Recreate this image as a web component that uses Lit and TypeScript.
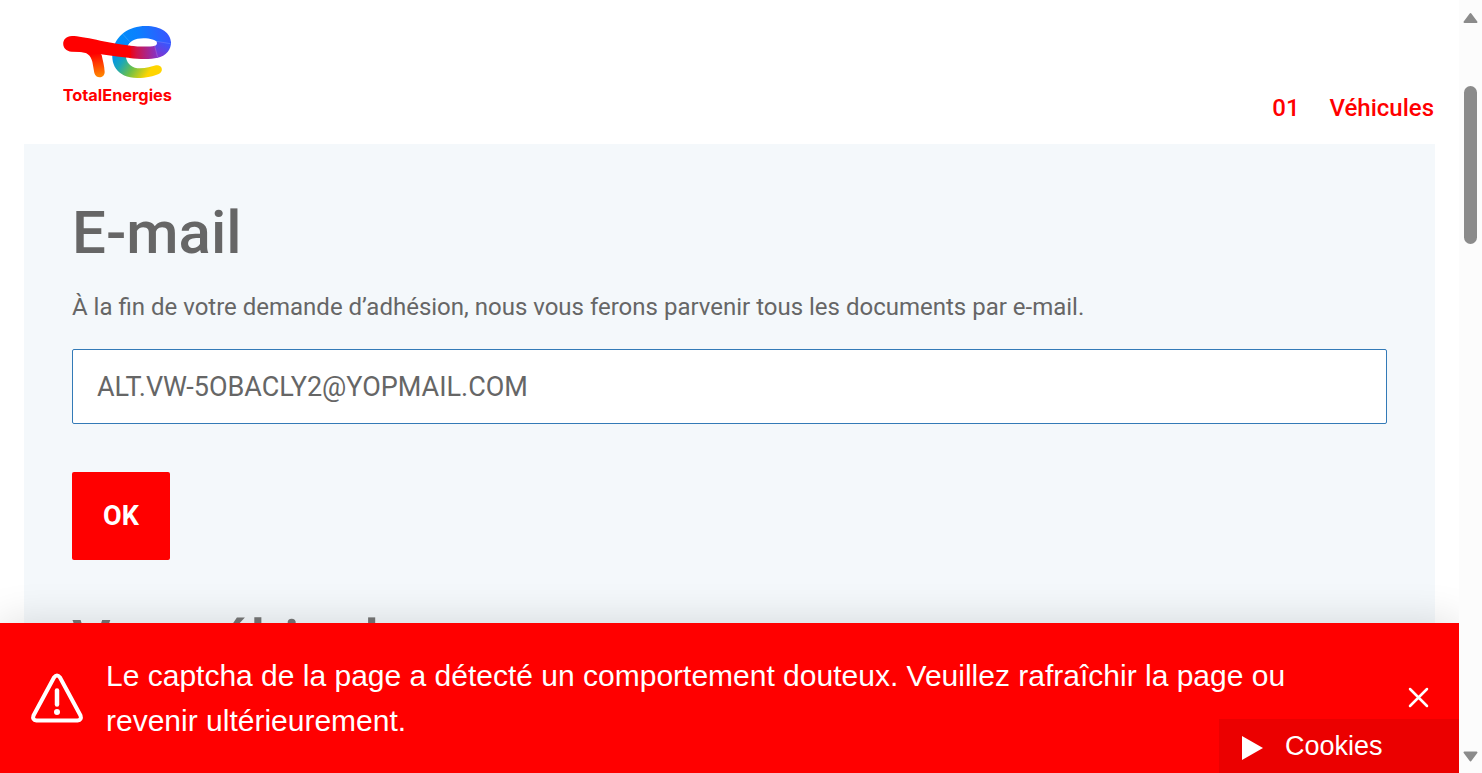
import { LitElement, html, css } from "lit";
import { customElement, state } from "lit/decorators.js";

@customElement("brand-logo")
class BrandLogo extends LitElement {
  static styles = css`
    :host { display: block; }
    .logo { display: block; width: 110px; height: 84px; }
    .name { font: 700 49px Inter, "Liberation Sans", sans-serif; fill: #f00; }
  `;
  render() {
    return html`
      <svg class="logo" viewBox="39 30 330 252" role="img" aria-label="TotalEnergies">
        <defs>
          <linearGradient id="top" gradientUnits="userSpaceOnUse" x1="195" y1="90" x2="355" y2="70">
            <stop offset="0" stop-color="#0090f5" /><stop offset=".45" stop-color="#0a80ff" /><stop offset="1" stop-color="#3657ff" />
          </linearGradient>
          <linearGradient id="low" gradientUnits="userSpaceOnUse" x1="193" y1="112" x2="292" y2="180">
            <stop offset="0" stop-color="#0090f0" /><stop offset=".3" stop-color="#1ba7b8" /><stop offset=".6" stop-color="#6cc04a" /><stop offset="1" stop-color="#ffd500" />
          </linearGradient>
          <linearGradient id="band" gradientUnits="userSpaceOnUse" x1="238" y1="110" x2="325" y2="105">
            <stop offset="0" stop-color="#f00010" /><stop offset=".25" stop-color="#d0144a" /><stop offset="1" stop-color="#8035d0" />
          </linearGradient>
          <linearGradient id="side" gradientUnits="userSpaceOnUse" x1="322" y1="122" x2="345" y2="80">
            <stop offset="0" stop-color="#8035d0" /><stop offset="1" stop-color="#3657ff" />
          </linearGradient>
          <linearGradient id="leg" gradientUnits="userSpaceOnUse" x1="140" y1="115" x2="150" y2="182">
            <stop offset="0" stop-color="#ff0000" /><stop offset="1" stop-color="#ff8200" />
          </linearGradient>
        </defs>
        <path fill="url(#low)" d="M190 100C178 146 200 189 262 189C290 189 311 184 326 177C343 169 336 148 318 151C303 155 289 160 270 160C248 160 232 148 228 128L240 100Z" />
        <path fill="url(#top)" d="M189 104C198 62 236 33 287 33C334 33 363 55 363 84L322 82C317 76 302 70 280 70C255 70 237 80 232 96Z" />
        <path fill="url(#side)" d="M320 80L363 80C364 103 349 123 321 129L313 93C319 91 323 87 320 80Z" />
        <path fill="url(#band)" d="M238 92C270 95 296 96 315 92L323 128C303 133 272 133 238 129Z" />
        <path fill="url(#leg)" d="M86 110C112 110 122 121 127 140L133 174C137 192 164 191 164 171C163 151 158 137 155 120L140 105Z" />
        <path fill="#ff0000" d="M66 63C100 63 170 84 241 92L241 129C190 124 130 111 65 110C31 109 31 63 66 63Z" />
        <g stroke="#ffffff" stroke-opacity=".3" stroke-width="1.5">
          <path d="M218 57L239 80M319 79L361 86M314 93L323 127" />
        </g>
        <text class="name" x="38" y="259">TotalEnergies</text>
      </svg>
    `;
  }
}

@customElement("page-scrollbar")
class PageScrollbar extends LitElement {
  static styles = css`
    :host { display: flex; flex-direction: column; align-items: center; width: 23px; background: #fcfcfc; padding: 12px 0 10px; box-sizing: border-box; }
    .arrow { display: block; width: 15px; height: 12px; flex: none; }
    .track { flex: 1; padding-top: 62px; }
    .thumb { width: 13px; height: 158px; border-radius: 7px; background: #8b8b8b; }
  `;
  render() {
    return html`
      <svg class="arrow" viewBox="0 0 15 12"><path d="M7.5 2L13.5 10H1.5Z" fill="#8b8b8b" stroke="#8b8b8b" stroke-width="2" stroke-linejoin="round" /></svg>
      <div class="track"><div class="thumb"></div></div>
      <svg class="arrow" viewBox="0 0 15 12"><path d="M7.5 9.5L13.5 1.5H1.5Z" fill="#8b8b8b" stroke="#8b8b8b" stroke-width="2" stroke-linejoin="round" /></svg>
    `;
  }
}

@customElement("app-root")
class AppRoot extends LitElement {
  @state() private alertOpen = true;

  static styles = css`
    :host { display: flex; height: 100vh; overflow: hidden; background: #fff; color: #666; font-family: Roboto, "Liberation Sans", sans-serif; }
    * { box-sizing: border-box; }
    .view { position: relative; flex: 1; min-width: 0; overflow: hidden; }
    .page { padding: 0 24px; }
    header { display: flex; justify-content: space-between; align-items: flex-end; height: 144px; padding: 0 1px 20px 39px; }
    .brand { display: block; align-self: flex-start; padding-top: 25px; }
    .step { display: flex; gap: 30px; color: #f00; text-decoration: none; font-size: 24px; font-weight: 500; line-height: 32px; }
    main { background: #f4f8fb; padding: 48px; }
    h1, h2 { margin: 0; font-size: 60px; font-weight: 500; line-height: 82px; }
    h2 { color: #777; }
    .lead { display: block; margin: 15px 0 24px; font-size: 24px; line-height: 36px; }
    .email { display: block; width: 100%; height: 75px; padding: 0 24px; border: 1px solid #337ab7; border-radius: 2px; background: #fff; color: #666; font-family: inherit; font-size: 27px; outline: none; }
    .ok { display: block; min-width: 98px; height: 88px; margin: 48px 0 41px; border: 0; border-radius: 2px; background: #f00; color: #fff; font-family: inherit; font-size: 27px; font-weight: 700; }
    .alert { position: absolute; left: 0; right: 0; bottom: 0; display: flex; align-items: center; height: 150px; padding: 0 24px 0 30px; background: #f00; color: #fff; box-shadow: 0 0 40px rgba(0, 0, 0, .14); font-family: "Liberation Sans", Arial, sans-serif; }
    .warning { flex: none; width: 54px; height: 52px; }
    .message { flex: 1; margin: 0 96px 0 22px; font-size: 30px; line-height: 45px; }
    .close { flex: none; width: 32px; height: 32px; padding: 0; border: 0; background: none; }
    .close svg { display: block; }
    .cookies { position: absolute; right: 0; bottom: 0; display: flex; align-items: center; gap: 22px; width: 240px; height: 54px; padding: 0 23px; border: 0; background: #eb0000; color: #fff; font: 27px "Liberation Sans", Arial, sans-serif; }
    .play { margin-top: 4px; }
  `;

  render() {
    return html`
      <div class="view">
        <div class="page">
          <header>
            <a class="brand" href="#"><brand-logo></brand-logo></a>
            <a class="step" href="#vehicules"><span>01</span><span>Véhicules</span></a>
          </header>
          <main>
            <h1>E-mail</h1>
            <label class="lead" for="email">À la fin de votre demande d’adhésion, nous vous ferons parvenir tous les documents par e-mail.</label>
            <input class="email" id="email" type="email" value="ALT.VW-5OBACLY2@YOPMAIL.COM" />
            <button class="ok" type="button">OK</button>
            <h2 id="vehicules">Vos véhicules</h2>
          </main>
        </div>
        ${this.alertOpen
          ? html`<div class="alert" role="alert">
              <svg class="warning" viewBox="0 0 54 52" fill="none" stroke="#fff" stroke-linecap="round" stroke-linejoin="round">
                <path stroke-width="4" d="M24 5.5Q27 1.5 30 5.5L50.5 43.5Q52 48 47.5 48.5H6.5Q2 48 3.5 43.5Z" />
                <path stroke-width="4.5" d="M27 18.5V32.500" /><circle cx="27" cy="40" r="3" fill="#fff" stroke="none" />
              </svg>
              <p class="message">Le captcha de la page a détecté un comportement douteux. Veuillez rafraîchir la page ou revenir ultérieurement.</p>
              <button class="close" type="button" aria-label="Fermer" @click=${() => (this.alertOpen = false)}>
                <svg width="32" height="32" viewBox="0 0 32 32" stroke="#fff" stroke-width="2.5" stroke-linecap="round"><path d="M7 7L24 24M24 7L7 24" /></svg>
              </button>
            </div>`
          : ""}
        <button class="cookies" type="button">
          <svg class="play" width="21" height="24" viewBox="0 0 21 24"><path d="M0 0L21 12L0 24Z" fill="#fff" /></svg>
          <span>Cookies</span>
        </button>
      </div>
      <page-scrollbar></page-scrollbar>
    `;
  }
}
